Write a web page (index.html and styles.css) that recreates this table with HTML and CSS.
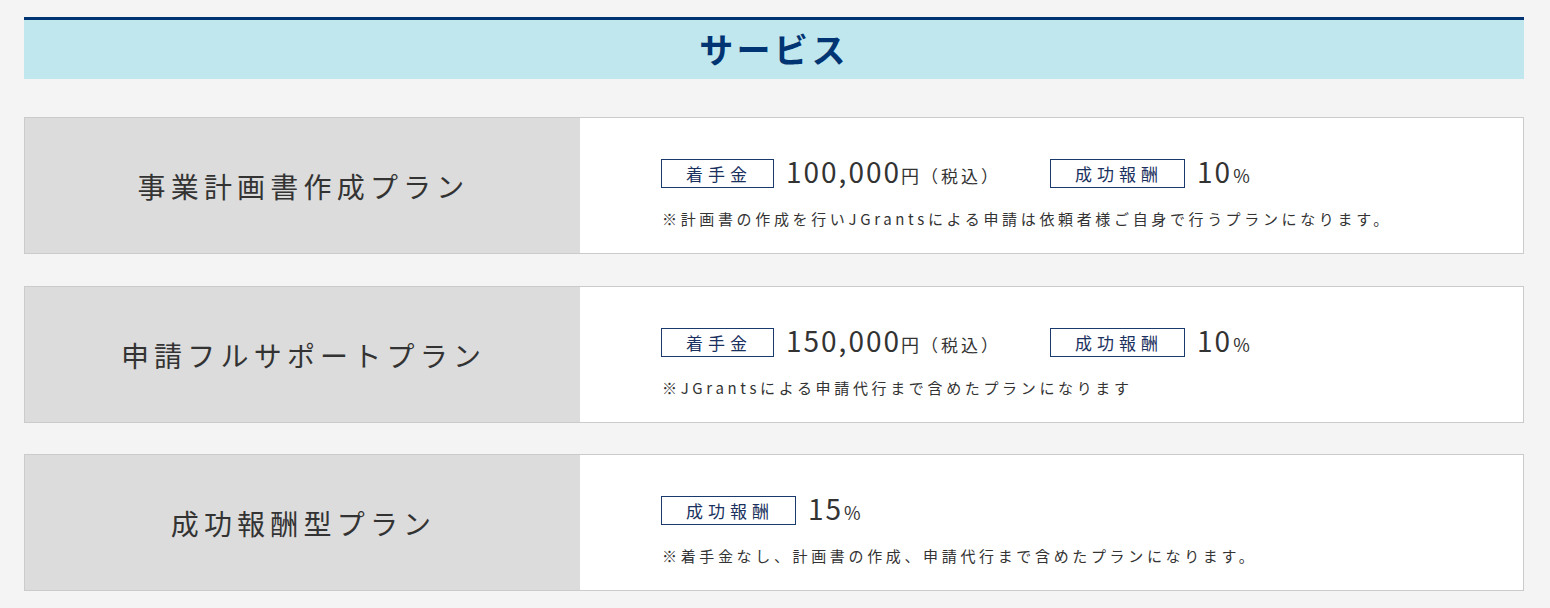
FILE: index.html
```html
<!DOCTYPE html>
<html lang="ja">
<head>
<meta charset="utf-8">
<title>サービス</title>
<link rel="stylesheet" href="styles.css">
</head>
<body>
<main class="wrap">
  <h2 class="heading">サービス</h2>

  <section class="plan">
    <div class="plan-name">事業計画書作成プラン</div>
    <div class="plan-info">
      <div class="prices">
        <span class="badge">着手金</span>
        <span class="price">100,000<span class="unit">円</span><span class="tax">（税込）</span></span>
        <span class="badge badge-second">成功報酬</span>
        <span class="price">10<span class="pct">%</span></span>
      </div>
      <p class="note">※計画書の作成を行いJGrantsによる申請は依頼者様ご自身で行うプランになります。</p>
    </div>
  </section>

  <section class="plan">
    <div class="plan-name">申請フルサポートプラン</div>
    <div class="plan-info">
      <div class="prices">
        <span class="badge">着手金</span>
        <span class="price">150,000<span class="unit">円</span><span class="tax">（税込）</span></span>
        <span class="badge badge-second">成功報酬</span>
        <span class="price">10<span class="pct">%</span></span>
      </div>
      <p class="note">※JGrantsによる申請代行まで含めたプランになります</p>
    </div>
  </section>

  <section class="plan plan-last">
    <div class="plan-name">成功報酬型プラン</div>
    <div class="plan-info">
      <div class="prices">
        <span class="badge">成功報酬</span>
        <span class="price">15<span class="pct">%</span></span>
      </div>
      <p class="note">※着手金なし、計画書の作成、申請代行まで含めたプランになります。</p>
    </div>
  </section>
</main>
</body>
</html>
```

FILE: styles.css
```css
* { box-sizing: border-box; }

html, body {
  margin: 0;
  padding: 0;
  background: #f4f4f4;
}

body {
  font-family: "Noto Sans CJK JP", "Noto Sans", sans-serif;
  color: #333333;
}

.wrap {
  width: 1500px;
  margin: 0 0 0 24px;
  padding: 17px 0 16px;
}

.heading {
  margin: 0;
  height: 62px;
  border-top: 3px solid #003473;
  background: #c0e7ed;
  color: #003473;
  font-size: 34px;
  font-weight: 700;
  letter-spacing: 0.1em;
  line-height: 57px;
  text-align: center;
}

.plan {
  display: flex;
  height: 137px;
  margin-top: 38px;
  border: 1px solid #cbcbcb;
  background: #ffffff;
}

.plan + .plan {
  margin-top: 32px;
}

.plan + .plan-last {
  margin-top: 31px;
}

.plan-name {
  width: 555px;
  flex: none;
  background: #dcdcdc;
  display: flex;
  align-items: center;
  justify-content: center;
  font-size: 28px;
  letter-spacing: 5.2px;
  padding-left: 2px;
  color: #333333;
}

.plan-info {
  flex: 1;
  padding: 41px 0 0 81px;
}

.prices {
  display: flex;
  align-items: center;
  height: 29px;
}

.badge {
  display: inline-block;
  height: 29px;
  padding: 0 21px 0 24px;
  border: 1px solid #1a3a6e;
  background: #ffffff;
  color: #1a3160;
  font-size: 17px;
  line-height: 27px;
  letter-spacing: 5px;
  white-space: nowrap;
}

.badge-second {
  margin-left: 49px;
}

.price {
  margin-left: 12px;
  font-size: 28px;
  font-weight: 400;
  letter-spacing: 2px;
  line-height: 29px;
  color: #333333;
  white-space: nowrap;
}

.unit {
  font-size: 18px;
  letter-spacing: 0;
}

.tax {
  font-size: 17px;
  letter-spacing: 3px;
  margin-left: 2px;
}

.pct {
  font-size: 18px;
  letter-spacing: 0;
  margin-left: 1px;
}

.note {
  margin: 20px 0 0 1px;
  font-size: 15px;
  line-height: 22px;
  letter-spacing: 3.65px;
  color: #333333;
}
```
